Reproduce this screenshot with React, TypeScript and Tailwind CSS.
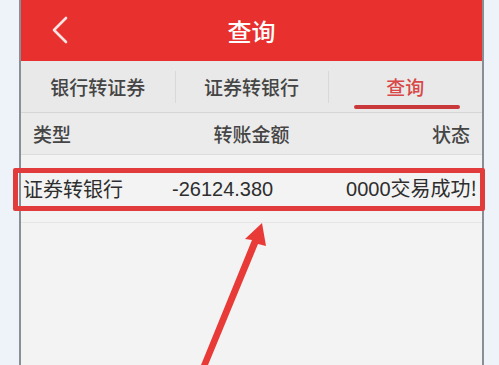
import React from "react";

const font = { fontFamily: '"Noto Sans CJK SC", "Noto Sans", sans-serif' };

// Tab labels for the transfer screen
const tabs = ["银行转证券", "证券转银行", "查询"];

export default function App() {
  return (
    <div
      className="relative w-[499px] h-[365px] overflow-hidden bg-[#eef3f9] flex"
      style={font}
    >
      {/* phone screen */}
      <div className="ml-[19px] w-[465px] h-full bg-[#f3f3f3] border-x-2 border-[#8a8f96] flex flex-col">
        {/* red title bar */}
        <div className="relative h-[61px] bg-[#e8302e] flex items-center justify-center shrink-0">
          <svg
            className="absolute left-[30px] top-[16px]"
            width="18"
            height="28"
            viewBox="0 0 18 28"
            fill="none"
          >
            <path d="M15 2 L3 14 L15 26" stroke="#fbe3e3" strokeWidth="2.6" strokeLinecap="round" strokeLinejoin="round" />
          </svg>
          <span className="text-white text-[24px] leading-none font-medium">查询</span>
        </div>

        {/* tabs */}
        <div className="h-[52px] bg-[#e9e9e9] flex border-b border-[#d6d6d6] shrink-0">
          {tabs.map((t, i) => (
            <div key={t} className="flex-1 relative flex items-center justify-center">
              {i > 0 && <div className="absolute left-0 top-[10px] h-[32px] w-px bg-[#d9d9d9]" />}
              <span
                className={
                  "text-[19px] leading-none font-medium " + (i === 2 ? "text-[#d84848]" : "text-[#454545]")
                }
              >
                {t}
              </span>
              {i === 2 && (
                <div className="absolute bottom-[3px] left-[26px] right-[22px] h-[4px] bg-[#c9393b] rounded-sm" />
              )}
            </div>
          ))}
        </div>

        {/* column header */}
        <div className="h-[42px] bg-[#ebebeb] flex items-center px-[12px] text-[19px] font-medium text-[#454545] leading-none border-b border-[#dcdcdc] shrink-0">
          <span className="w-[150px]">类型</span>
          <span className="flex-1 text-center">转账金额</span>
          <span className="w-[150px] text-right">状态</span>
        </div>

        {/* record row */}
        <div className="h-[68px] flex items-center pl-[2px] pr-[5px] text-[20px] text-[#2e2e2e] leading-none border-b border-[#e6e6e6] shrink-0">
          <span className="w-[149px]">证券转银行</span>
          <span className="flex-1" style={{ fontFamily: '"Liberation Sans", "Noto Sans CJK SC", sans-serif' }}>
            -26124.380
          </span>
          <span className="text-right">
            <span style={{ fontFamily: '"Liberation Sans", sans-serif' }}>0000</span>交易成功!
          </span>
        </div>
      </div>

      {/* annotation: red box */}
      <div className="absolute left-[13px] top-[168px] w-[472px] h-[43px] border-[5px] border-[#e23b3b] rounded-[2px]" />

      {/* annotation: arrow */}
      <svg className="absolute left-0 top-0" width="499" height="365" viewBox="0 0 499 365">
        <polygon
          points="262,223 245,239 252,240 201,365 208,365 258,244 266,246"
          fill="#e83a36"
        />
      </svg>
    </div>
  );
}
